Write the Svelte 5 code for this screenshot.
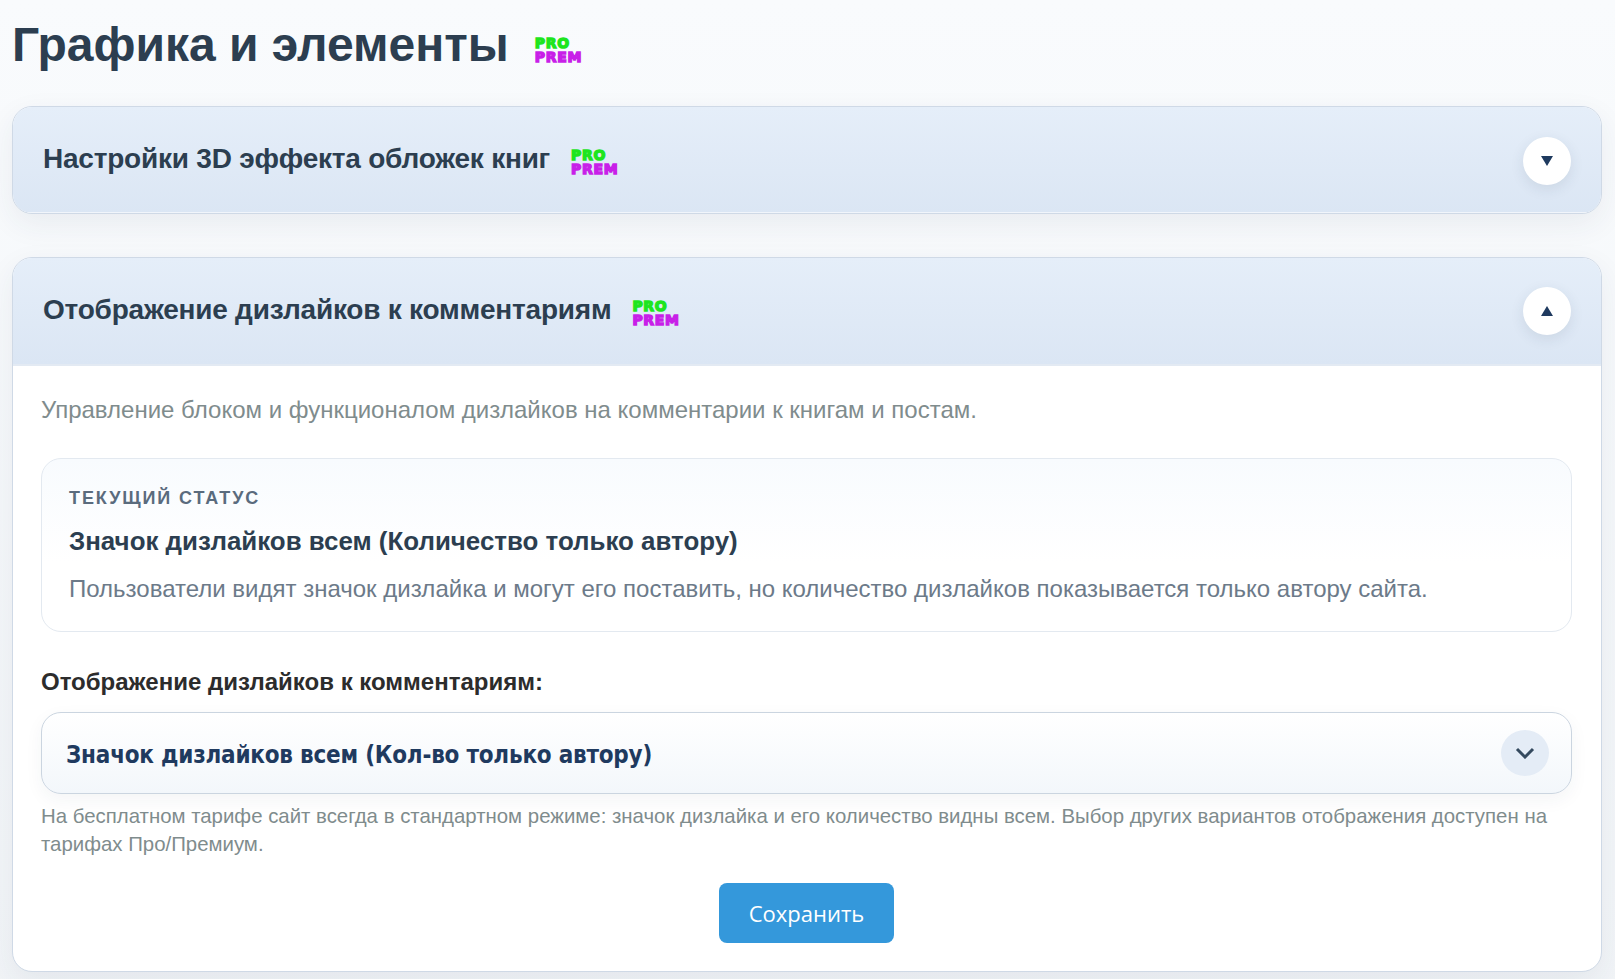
<script>
  const hint = 'На бесплатном тарифе сайт всегда в стандартном режиме: значок дизлайка и его количество видны всем. Выбор других вариантов отображения доступен на тарифах Про/Премиум.';
</script>

{#snippet badge()}
  <span class="badge"><span class="pro">PRO</span><span class="prem">PREM</span></span>
{/snippet}

<div class="page">
  <h1>Графика и элементы {@render badge()}</h1>

  <section class="card closed">
    <header class="card-head">
      <h2>Настройки 3D эффекта обложек книг {@render badge()}</h2>
      <button class="toggle" aria-label="Развернуть">
        <svg width="12" height="10" viewBox="0 0 12 10"><path d="M0 0h12L6 10z" /></svg>
      </button>
    </header>
  </section>

  <section class="card">
    <header class="card-head open">
      <h2>Отображение дизлайков к комментариям {@render badge()}</h2>
      <button class="toggle" aria-label="Свернуть">
        <svg width="12" height="10" viewBox="0 0 12 10"><path d="M6 0l6 10H0z" /></svg>
      </button>
    </header>

    <div class="card-body">
      <p class="lead">Управление блоком и функционалом дизлайков на комментарии к книгам и постам.</p>

      <div class="status">
        <div class="status-label">Текущий статус</div>
        <div class="status-title">Значок дизлайков всем (Количество только автору)</div>
        <div class="status-text">Пользователи видят значок дизлайка и могут его поставить, но количество дизлайков показывается только автору сайта.</div>
      </div>

      <div class="field-label">Отображение дизлайков к комментариям:</div>
      <div class="select">
        <span class="select-value">Значок дизлайков всем (Кол-во только автору)</span>
        <span class="chevron">
          <svg width="20" height="12" viewBox="0 0 20 12"><path d="M2 2l8 8 8-8" /></svg>
        </span>
      </div>
      <p class="hint">{hint}</p>

      <div class="actions">
        <button class="save">Сохранить</button>
      </div>
    </div>
  </section>
</div>

<style>
  :global(body) {
    background: linear-gradient(180deg, #f9fbfd 0%, #f1f4f7 100%);
    min-height: 979px;
    font-family: "Liberation Sans", Arial, sans-serif;
  }

  .page {
    padding: 12px 13px 0 12px;
  }

  h1 {
    margin: 0 0 29px;
    display: flex;
    align-items: center;
    gap: 26px;
    font-size: 48px;
    line-height: 65px;
    font-weight: 700;
    color: #2c3e50;
  }

  h1 .badge {
    margin-top: 10px;
  }

  .badge {
    display: inline-flex;
    flex-direction: column;
    font-family: "DejaVu Sans", sans-serif;
    font-size: 14px;
    line-height: 14px;
    font-weight: 700;
    letter-spacing: 0.7px;
    -webkit-text-stroke: 1.4px currentColor;
  }

  .pro {
    color: #1ee51e;
  }

  .prem {
    color: #c81fe8;
  }

  .card {
    background: #fff;
    border: 1px solid #cfd9e6;
    border-radius: 20px;
    margin-bottom: 43px;
    overflow: hidden;
    box-shadow: 0 10px 30px rgba(44, 62, 80, 0.07);
  }

  .card-head {
    display: flex;
    align-items: center;
    justify-content: space-between;
    height: 106px;
    padding: 0 30px;
    background: linear-gradient(180deg, #e5eef9 0%, #dbe6f4 100%);
  }

  .closed .card-head {
    box-shadow: inset 0 -1px 0 rgba(255, 255, 255, 0.6);
  }

  .closed .toggle {
    margin-top: 2px;
  }

  .card-head.open {
    border-bottom: 2px solid #e3eaf3;
  }

  h2 {
    margin: 0;
    padding-bottom: 2px;
    display: flex;
    align-items: center;
    gap: 21px;
    font-size: 28px;
    letter-spacing: -0.22px;
    font-weight: 700;
    color: #2c3e50;
  }

  h2 .badge {
    margin-top: 5px;
    letter-spacing: 0.7px;
  }

  .toggle {
    width: 48px;
    height: 48px;
    padding: 0;
    border: 0;
    border-radius: 50%;
    background: #fff;
    display: flex;
    align-items: center;
    justify-content: center;
    box-shadow: 0 4px 14px rgba(44, 62, 80, 0.1);
  }

  .toggle path {
    fill: #1f3a5f;
  }

  .card-body {
    padding: 28px 29px 28px 28px;
  }

  .lead {
    margin: 0 0 32px;
    font-size: 24px;
    line-height: 32px;
    color: #7f8c8d;
  }

  .status {
    border: 1px solid #e3e9f0;
    border-radius: 20px;
    background: linear-gradient(180deg, #f8fbfe 0%, #fff 60%);
    padding: 27px 27px 26px;
  }

  .status-label {
    font-size: 18px;
    line-height: 24px;
    font-weight: 700;
    letter-spacing: 1.9px;
    text-transform: uppercase;
    color: #5a6b7d;
    margin-bottom: 15px;
  }

  .status-title {
    font-size: 25.9px;
    line-height: 32px;
    font-weight: 700;
    color: #2c3e50;
    margin-bottom: 16px;
  }

  .status-text {
    font-size: 24px;
    line-height: 32px;
    color: #6c7a89;
  }

  .field-label {
    margin-top: 34px;
    font-size: 24px;
    line-height: 32px;
    font-weight: 700;
    color: #2c2c2c;
  }

  .select {
    margin-top: 14px;
    height: 82px;
    box-sizing: border-box;
    border: 1px solid #cbd5e0;
    border-radius: 20px;
    background: linear-gradient(180deg, #fff 0%, #f3f7fb 100%);
    box-shadow: 0 6px 18px rgba(44, 62, 80, 0.05);
    display: flex;
    align-items: center;
    justify-content: space-between;
    padding: 0 22px 0 24px;
    font-family: "DejaVu Sans Condensed", "DejaVu Sans", sans-serif;
    font-stretch: condensed;
    font-size: 24px;
    letter-spacing: -0.23px;
    font-weight: 700;
    color: #1f3a5f;
  }

  .select-value {
    padding-top: 4px;
  }

  .chevron {
    width: 48px;
    height: 46px;
    border-radius: 50%;
    background: #e4ecf6;
    display: flex;
    align-items: center;
    justify-content: center;
  }

  .chevron path {
    fill: none;
    stroke: #34495e;
    stroke-width: 3;
  }

  .hint {
    margin: 8px 0 0;
    font-size: 20.4px;
    line-height: 28px;
    color: #7f8c8d;
  }

  .actions {
    margin-top: 25px;
    display: flex;
    justify-content: center;
  }

  .save {
    width: 175px;
    height: 60px;
    border: 0;
    border-radius: 8px;
    background: #3498db;
    color: #fff;
    font-family: "Open Sans", sans-serif;
    font-size: 22px;
  }
</style>
